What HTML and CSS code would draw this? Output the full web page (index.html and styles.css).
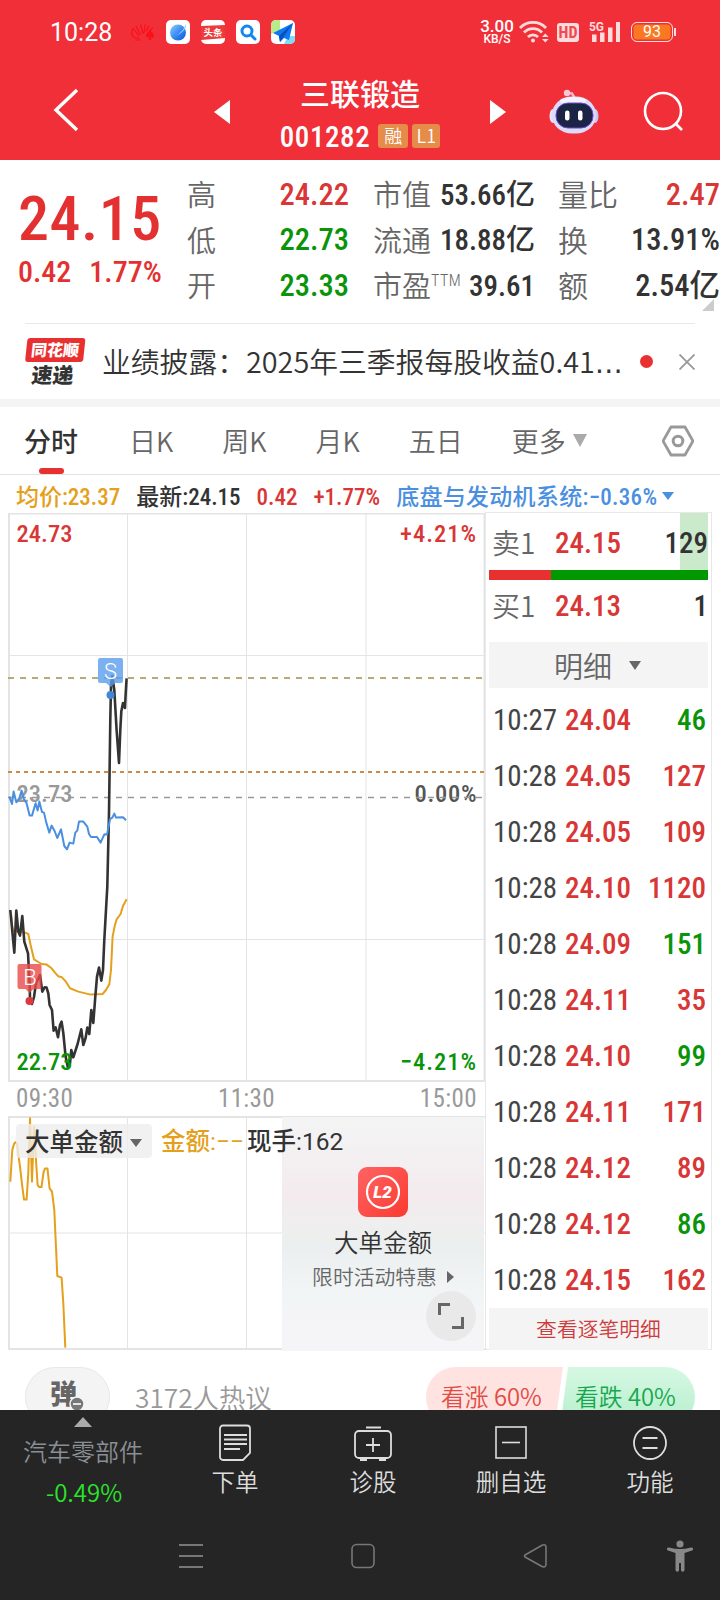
FILE: index.html
```html
<!DOCTYPE html>
<html lang="zh-CN">
<head>
    <meta charset="UTF-8">
    <meta name="viewport" content="width=device-width, initial-scale=1.0">
    <title>三联锻造 001282</title>
    <link rel="stylesheet" href="styles.css">
</head>
<body>
    <header class="top">
        <div class="status-bar">
            <span class="clock">10:28</span>
            <div class="apps">
                <svg class="huawei" width="24" height="24" viewBox="0 0 24 24" fill="none" stroke="#fb0f18" stroke-width="1.2">
                    <path d="M2.500 17C0 14 0 11 2 8.500l6 7.500M5 6l4.500 9M9.500 4.500L12 14M14 4.500L13 13M18 5.500l-3 6M22 8l-3 2M2.500 17.500l6 .5M4 20h6"/>
                    <path d="M19 9c-1 3-4 4-4 7 0 2 3 2 3.600 1l-1 3h3l-1-3c1 1 3.400 1 3.400-1 0-3-3-4-4-7z" fill="#fb0f18" stroke="none"/>
                </svg>
                <svg width="24" height="24" viewBox="0 0 24 24">
                    <defs><linearGradient id="planet" x1="0" y1="0" x2="1" y2="1"><stop offset="0" stop-color="#8fd0ff"/><stop offset=".5" stop-color="#3b8cf5"/><stop offset="1" stop-color="#0a55d8"/></linearGradient></defs>
                    <rect width="24" height="24" rx="5" fill="#fff"/>
                    <circle cx="12" cy="12.500" r="8" fill="url(#planet)"/>
                    <path d="M4 17.500C10 17 17 12 20 4c1.500 4-5 11.500-16 13.500z" fill="#9ad2ff"/>
                </svg>
                <svg width="24" height="24" viewBox="0 0 24 24">
                    <rect width="24" height="24" rx="5" fill="#fff"/>
                    <path d="M0 6l24-1v13L0 20z" fill="#ee3a3c"/>
                    <text x="12" y="16" font-size="9.500" text-anchor="middle" fill="#fff" font-weight="700">头条</text>
                </svg>
                <svg width="24" height="24" viewBox="0 0 24 24" fill="none" stroke="#1487ee">
                    <rect width="24" height="24" rx="5" fill="#fff" stroke="none"/>
                    <circle cx="11" cy="11" r="5" stroke-width="3"/>
                    <path d="M15 15l4 4" stroke-width="3" stroke-linecap="round"/>
                </svg>
                <svg width="24" height="24" viewBox="0 0 24 24">
                    <rect width="24" height="24" rx="5" fill="#fff"/>
                    <path d="M5 0h4v10l-9 4V5a5 5 0 0 1 5-5z" fill="#b8ec8a"/>
                    <path d="M13 24l4-8h7v3a5 5 0 0 1-5 5z" fill="#7fdcf8"/>
                    <path d="M22 3L2 13l6 3 1 6 4-4 5 2z" fill="#1078f0"/>
                    <path d="M22 3L8 16l1 6z" fill="#0a50c0"/>
                </svg>
            </div>
            <div class="speed"><b>3.00</b><span>KB/S</span></div>
            <svg class="wifi" width="30" height="24" viewBox="0 0 30 24" fill="none" stroke="#ffdbdc" stroke-width="2.800">
                <path d="M1 8a18 18 0 0 1 26 0M5 12.500a12.500 12.500 0 0 1 18 0M9 17a7 7 0 0 1 10 0"/>
                <circle cx="14" cy="20.500" r="2" fill="#ffdbdc" stroke="none"/>
                <path d="M23 17l3.300-3.600 3.300 3.600zM23 19l3.300 3.600L29.600 19z" fill="#ffdbdc" stroke="none"/>
            </svg>
            <span class="hd">HD</span>
            <svg class="signal" width="31" height="24" viewBox="0 0 31 24" fill="#ffdbdc">
                <path d="M3 14.500h4.500V22H3zM11 12.500h4.500V22H11zM19 7.500h4.500V22H19zM27 2h4v20h-4z"/>
                <text x="0" y="11" font-size="13" font-weight="700" textLength="15" lengthAdjust="spacingAndGlyphs">5G</text>
            </svg>
            <span class="battery">93</span>
        </div>
        <nav class="title-bar">
            <svg class="back" width="28" height="44" viewBox="0 0 28 44" fill="none" stroke="#fff" stroke-width="3.400"><path d="M25 2L4 22l21 20"/></svg>
            <svg class="prev" width="16" height="24" viewBox="0 0 16 24"><path d="M16 0v24L0 12z" fill="#fff"/></svg>
            <div class="stock">
                <h1>三联锻造</h1>
                <div class="code"><span class="num">001282</span><i>融</i><i class="level">L1</i></div>
            </div>
            <svg class="next" width="16" height="24" viewBox="0 0 16 24"><path d="M0 0v24l16-12z" fill="#fff"/></svg>
            <svg class="robot" width="50" height="46" viewBox="0 0 50 46">
                <path d="M18 4l5 .5 3 5" fill="none" stroke="#f7b6cb" stroke-width="2.500"/>
                <circle cx="18" cy="4" r="3.200" fill="#f9c7d6"/>
                <ellipse cx="4" cy="27" rx="3.500" ry="7" fill="#e3e2fb"/>
                <ellipse cx="46" cy="27" rx="3.500" ry="7" fill="#c9c8f7"/>
                <rect x="3" y="7.500" width="44" height="37" rx="20" ry="18" fill="#dcdcfa"/>
                <ellipse cx="24" cy="12" rx="13" ry="4" fill="#f2f3ff"/>
                <rect x="7" y="14" width="37" height="25" rx="12" fill="#1b2444" stroke="#6a4ad0" stroke-width="1"/>
                <rect x="16" y="21.500" width="4.500" height="10" rx="2.200" fill="#fff"/>
                <rect x="29" y="21.500" width="4.500" height="10" rx="2.200" fill="#fff"/>
            </svg>
            <svg class="search" width="42" height="42" viewBox="0 0 42 42" fill="none" stroke="#fff" stroke-width="2.600"><circle cx="20" cy="20" r="18"/><path d="M32 32l7 7"/></svg>
        </nav>
    </header>

    <section class="quote">
        <div class="price">
            <strong class="num">24.15</strong>
            <div class="change num"><span>0.42</span><span>1.77%</span></div>
        </div>
        <dl>
            <div><dt>高</dt><dd class="num up">24.22</dd></div>
            <div><dt>低</dt><dd class="num down">22.73</dd></div>
            <div><dt>开</dt><dd class="num down">23.33</dd></div>
        </dl>
        <dl class="value">
            <div><dt>市值</dt><dd class="num">53.66亿</dd></div>
            <div><dt>流通</dt><dd class="num">18.88亿</dd></div>
            <div><dt>市盈<sup>TTM</sup></dt><dd class="num">39.61</dd></div>
        </dl>
        <dl>
            <div><dt>量比</dt><dd class="num up">2.47</dd></div>
            <div><dt>换</dt><dd class="num">13.91%</dd></div>
            <div><dt>额</dt><dd class="num">2.54亿</dd></div>
        </dl>
        <span class="corner"></span>
    </section>

    <section class="news">
        <div class="news-logo"><span>同花顺</span><em>速递</em></div>
        <p>业绩披露：2025年三季报每股收益0.41<span>…</span></p>
        <span class="dot"></span>
        <svg width="16" height="16" viewBox="0 0 16 16" stroke="#999" stroke-width="1.800"><path d="M.5.500l15 15M15.500.500l-15 15"/></svg>
    </section>

    <nav class="tabs">
        <a class="active">分时</a>
        <a>日K</a>
        <a>周K</a>
        <a>月K</a>
        <a>五日</a>
        <a>更多</a>
        <i class="more"></i>
        <svg width="32" height="32" viewBox="0 0 32 32" fill="none" stroke="#999" stroke-linejoin="round"><path d="M9 2h14l8 14-8 14H9L1 16z" stroke-width="2.800"/><circle cx="16" cy="16" r="4.800" stroke-width="3"/></svg>
    </nav>

    <div class="legend num">
        <span class="avg">均价:23.37</span>
        <span>最新:24.15</span>
        <span class="up">0.42</span>
        <span class="up">+1.77%</span>
        <span class="sector">底盘与发动机系统:−0.36%</span>
        <i></i>
    </div>

    <main class="board">
        <div class="charts">
            <svg class="minute" width="478" height="569" viewBox="8 513 478 569">
                <g class="grid">
                    <path d="M8 655.500h478M8 939.500h478M127.500 513v569M246.500 513v569M366 513v569"/>
                    <path d="M9 513v569M8 513.500h478M8 1081h478M484.500 513v569" stroke-width="2"/>
                </g>
                <g class="chart-text gray"><text x="16.500" y="802" textLength="56">23.73</text></g>
                <g class="chart-text dark"><text x="414.500" y="802" textLength="62">0.00%</text></g>
                <path d="M8 678h477" stroke="#b9a878" stroke-width="2" stroke-dasharray="6 6"/>
                <path d="M8 772h477" stroke="#c98d45" stroke-width="2" stroke-dasharray="4 4"/>
                <path d="M8 797.500h478" stroke="#999" stroke-width="1.600" stroke-dasharray="6 6"/>
                <polyline class="avg-line" points="11,914 12,925 13.300,931 25,932.600 28.300,934 30.600,945 34,959.300 38.300,962 41.600,964 46.600,964.600 51.600,968.300 55,972.600 58.300,976.300 62,977.300 65.600,981.300 70,988.300 78.300,991.600 90.600,994.600 102.600,994 106,990 109.300,984.300 111,970 112.600,936.600 114.600,926.600 116.600,919.300 120.600,914 123,906 126.600,899.300"/>
                <polyline class="price-line" points="10.300,910 14.300,952.600 16.300,910.600 18.300,931.600 20,935.600 22.300,916 24.300,941.600 28,953.300 29.600,983 30,998 32,1004 34,997 36,983 40,975 42.300,991.600 44.600,987.300 46.600,987.600 48.300,993.300 49.600,1005 52,1010 53.600,1030.600 55.600,1027.300 58,1037.300 60,1025 61.600,1021.600 63.300,1033 65.600,1056.600 68,1068 70,1063 71.300,1050 73.300,1057.300 77.600,1044 81.300,1029.300 83.300,1045 85.600,1038 87.300,1027.600 89.300,1034 91.300,1010 93.300,1023 95.300,996.600 97,976.600 99,967.600 101.300,980.600 103,970 104.300,940 107.300,886.600 109,813 110.300,720 111,686 112.300,676 114.300,690 116.600,730 119,763 120.300,730 121.300,711.600 123,703 125,708 125.600,695 126.600,678.300"/>
                <polyline class="sector-line" points="9.300,796.600 12,804 13.600,791.600 16.300,802.300 19.300,798.300 21.600,790.600 24,799.300 26.600,803.300 29.600,815.600 32,815.600 35.600,803.300 37.600,810.600 39.300,801.600 42,812 44,812.600 46.300,822.600 49.300,832.600 51.600,825.600 54.600,831 57.300,838 61,829.300 64.300,846 67,849.300 69.600,842.600 73.300,843.600 75.300,832.600 77.300,830.600 79,821.600 83.300,821.600 87.300,826.600 89,834 91,837 97,837 100.600,842.600 104.300,834.300 107,834.600 110,819.300 112.300,817.600 114.300,813.600 116,817.600 123,817.300 126,820.300"/>
                <g class="mark-s"><path d="M100 658h21a2 2 0 0 1 2 2v21a2 2 0 0 1-2 2h-6l-4 4-5-4h-6a2 2 0 0 1-2-2v-21a2 2 0 0 1 2-2z"/><circle cx="110.500" cy="695" r="4"/><text x="110.500" y="678.500">S</text></g>
                <g class="mark-b"><path d="M19.500 964h20a2 2 0 0 1 2 2v21a2 2 0 0 1-2 2h-6l-4 4-4-4h-6a2 2 0 0 1-2-2v-21a2 2 0 0 1 2-2z"/><circle cx="29.500" cy="1001" r="4"/><text x="30" y="984.500">B</text></g>
                <g class="chart-text red"><text x="16.500" y="541.500" textLength="56">24.73</text><text x="400" y="541.500" textLength="76">+4.21%</text></g>
                <g class="chart-text green"><text x="16.500" y="1069.500" textLength="56">22.73</text><text x="400" y="1069.500" textLength="76">−4.21%</text></g>
            </svg>
            <div class="axis num"><span>09:30</span><span>11:30</span><span>15:00</span></div>
            <div class="sub">
                <svg width="478" height="234" viewBox="8 1116 478 234">
                    <g class="grid">
                        <path d="M8 1233h478M127.500 1117v232M246.500 1117v232M366 1117v232"/>
                        <path d="M9 1116v234M8 1117h478M8 1349h478" stroke-width="2"/>
                    </g>
                    <path class="avg-line" d="M10.300 1181.700L12.300 1150 14 1144Q16 1140 17 1144.600L20 1166.600 22.300 1186.600 24 1199.600H26.600L28.300 1173 30 1118.300 32 1181.600 34 1126.600 36 1160 37.600 1185 39 1187H41.500L43.600 1172 45 1168.600H47.500L49.600 1188.300 52 1191.600 54.300 1210 57.300 1276 61.600 1277.600 63.300 1303 65.300 1347.600"/>
                </svg>
                <div class="sub-head"><span class="pick">大单金额<i></i></span><span class="avg">金额:−−</span><span class="hand">现手:162</span></div>
                <div class="promo">
                    <svg width="50" height="50" viewBox="0 0 50 50">
                        <defs><linearGradient id="l2" x1="0" y1="0" x2="1" y2="1"><stop offset="0" stop-color="#ff6464"/><stop offset="1" stop-color="#fb3a30"/></linearGradient></defs>
                        <rect width="50" height="50" rx="9" fill="url(#l2)"/>
                        <circle cx="25" cy="25" r="16" fill="none" stroke="#fff" stroke-width="2.200"/>
                        <text x="24.500" y="31" text-anchor="middle" font-size="17" font-weight="900" font-style="italic" fill="#fff">L2</text>
                    </svg>
                    <b>大单金额</b>
                    <small>限时活动特惠<i></i></small>
                    <span class="expand"><svg width="28" height="28" viewBox="0 0 28 28" fill="none" stroke="#666" stroke-width="3"><path d="M2.500 13V2.500H13M15 25.500h10.500V15"/></svg></span>
                </div>
            </div>
        </div>
        <aside class="depth">
            <div class="order num"><span>卖1</span><b>24.15</b><em class="hot">129</em></div>
            <div class="ratio"><i></i></div>
            <div class="order buy num"><span>买1</span><b>24.13</b><em>1</em></div>
            <div class="detail-head">明细<i></i></div>
            <ul class="ticks num">
                <li><span>10:27</span><b>24.04</b><em class="down">46</em></li>
                <li><span>10:28</span><b>24.05</b><em class="up">127</em></li>
                <li><span>10:28</span><b>24.05</b><em class="up">109</em></li>
                <li><span>10:28</span><b>24.10</b><em class="up">1120</em></li>
                <li><span>10:28</span><b>24.09</b><em class="down">151</em></li>
                <li><span>10:28</span><b>24.11</b><em class="up">35</em></li>
                <li><span>10:28</span><b>24.10</b><em class="down">99</em></li>
                <li><span>10:28</span><b>24.11</b><em class="up">171</em></li>
                <li><span>10:28</span><b>24.12</b><em class="up">89</em></li>
                <li><span>10:28</span><b>24.12</b><em class="down">86</em></li>
                <li><span>10:28</span><b>24.15</b><em class="up">162</em></li>
            </ul>
            <a class="all">查看逐笔明细</a>
        </aside>
    </main>

    <section class="talk">
        <div class="danmu">弹<svg width="16" height="16" viewBox="0 0 16 16"><circle cx="8" cy="8" r="7" fill="#777" stroke="#f4f4f4" stroke-width="1.500"/><path d="M4 8h8" stroke="#fff" stroke-width="1.600"/></svg></div>
        <p>3172人热议</p>
        <div class="vote"><span class="bull">看涨 60%</span><span class="bear">看跌 40%</span></div>
    </section>

    <footer class="bottom">
        <div class="menu">
            <div class="index"><i></i><span>汽车零部件</span><b>-0.49%</b></div>
            <a><svg width="34" height="38" viewBox="0 0 34 38" fill="none" stroke="#ddd" stroke-width="1.800"><path d="M5 1.500h24a3 3 0 0 1 3 3V29l-7 7H5a3 3 0 0 1-3-3V4.500a3 3 0 0 1 3-3zM6 11h23M6 15.500h23M6 20h23M6 25h16"/></svg>下单</a>
            <a><svg width="40" height="38" viewBox="0 0 40 38" fill="none" stroke="#ddd" stroke-width="1.800"><rect x="2" y="7" width="36" height="27" rx="4"/><path d="M13 3.500h15M20 14v14M13 21h14M7 36h7M26 36h7"/></svg>诊股</a>
            <a><svg width="34" height="38" viewBox="0 0 34 38" fill="none" stroke="#ddd" stroke-width="1.600"><rect x="2" y="3" width="30" height="31"/><path d="M8 18.500h18"/></svg>删自选</a>
            <a><svg width="36" height="38" viewBox="0 0 36 38" fill="none" stroke="#ddd" stroke-width="1.800"><circle cx="18" cy="19" r="16"/><path d="M10.500 14h15M10.500 24h15"/></svg>功能</a>
        </div>
        <div class="system">
            <svg width="24" height="26" viewBox="0 0 24 26" stroke="#777" stroke-width="1.800"><path d="M0 2h24M0 13h24M0 24h24"/></svg>
            <svg width="26" height="26" viewBox="0 0 26 26" fill="none" stroke="#777" stroke-width="1.600"><rect x="2" y="1.500" width="22" height="23" rx="4.500"/></svg>
            <svg width="26" height="26" viewBox="0 0 26 26" fill="none" stroke="#777" stroke-width="1.600"><path d="M3 12L20 2.200q4-1.500 4 2V21q0 4-4 2.500L3 14q-1-1 0-2z"/></svg>
            <svg width="26" height="34" viewBox="0 0 26 34" fill="#888"><circle cx="13" cy="5" r="3.600"/><path d="M2 8.500q11 3 22 0a1.500 1.500 0 0 1 1 3L17.500 14v17a1.500 1.500 0 0 1-3.500 0v-7h-2v7a1.500 1.500 0 0 1-3.500 0V14L1 11.500a1.500 1.500 0 0 1 1-3z"/></svg>
        </div>
    </footer>
</body>
</html>
```

FILE: styles.css
```css
* {
    box-sizing: border-box;
}

body {
    margin: 0;
    width: 720px;
    height: 1600px;
    overflow: hidden;
    display: flex;
    flex-direction: column;
    background-color: #fff;
    color: #333;
    font-family: "Noto Sans CJK SC", sans-serif;
    font-weight: 350;
}

svg {
    display: block;
    flex: none;
}

svg text {
    font-family: Roboto, "Noto Sans CJK SC", sans-serif;
}

i, em {
    font-style: normal;
}

.num {
    font-family: Roboto, "Noto Sans CJK SC", sans-serif;
    font-weight: 500;
    font-stretch: 75%;
    white-space: nowrap;
}

.up {
    color: #d93636;
}

.down {
    color: #099409;
}

/* header */
.top {
    height: 160px;
    flex: none;
    background-color: #f12f38;
    color: #fff;
}

.status-bar {
    display: flex;
    align-items: center;
    height: 64px;
    padding-left: 50px;
}

.clock {
    width: 81px;
    font-family: Roboto, sans-serif;
    font-size: 25px;
    font-weight: 400;
}

.apps {
    display: flex;
    gap: 11px;
    width: 349px;
}

.speed {
    display: flex;
    flex-direction: column;
    align-items: center;
    width: 34px;
    font-family: Roboto, sans-serif;
    font-size: 12px;
    font-weight: 500;
    line-height: 12px;
}

.speed b {
    font-size: 17px;
    font-weight: 500;
    line-height: 13px;
}

.wifi {
    margin-left: 5px;
}

.hd {
    width: 22px;
    height: 19px;
    margin-left: 8px;
    border-radius: 3px;
    background-color: #ffdbdc;
    color: #ee4a52;
    font: 700 16px/20px Roboto, sans-serif;
    font-stretch: 75%;
    text-align: center;
}

.signal {
    margin-left: 10px;
}

.battery {
    position: relative;
    width: 42px;
    height: 20px;
    margin-left: 11px;
    border: 1.5px solid #ffdbdc;
    border-radius: 6px;
    background-color: #fa7820;
    box-shadow: inset 0 0 0 1.5px #f12f38;
    font: 400 16px/18px Roboto, sans-serif;
    text-align: center;
}

.battery::after {
    content: "";
    position: absolute;
    right: -4px;
    top: 5px;
    width: 2px;
    height: 8px;
    background-color: #ffdbdc;
}

.title-bar {
    display: flex;
    align-items: center;
    height: 96px;
    padding-left: 52px;
}

.back {
    margin-top: -4px;
}

.prev {
    margin-left: 134px;
}

.stock {
    width: 260px;
    text-align: center;
}

.stock h1 {
    margin: 2px 0 0;
    font-size: 30px;
    line-height: 40px;
    font-weight: 500;
}

.code {
    display: flex;
    align-items: center;
    justify-content: center;
    gap: 4px;
    height: 42px;
    font-size: 29px;
}

.code .num {
    margin: 7px 4px 0 0;
    letter-spacing: 0.6px;
    line-height: 36px;
}

.code i {
    width: 30px;
    height: 24px;
    margin-top: 6px;
    border-radius: 3px;
    background-color: #e58c4a;
    font-size: 18px;
    line-height: 23px;
}

.code .level {
    width: 28px;
}

.robot {
    margin-left: 43px;
}

.search {
    margin-left: 44px;
}

/* quote */
.quote {
    position: relative;
    display: flex;
    height: 163px;
    flex: none;
    padding-top: 11px;
}

.price {
    width: 187px;
    padding: 18px 0 0 18px;
    color: #e33131;
}

.price strong {
    display: block;
    font-size: 62px;
    line-height: 60px;
    font-weight: 500;
    letter-spacing: 0.5px;
}

.change {
    display: flex;
    gap: 18px;
    font-size: 30px;
    line-height: 46px;
}

.quote dl {
    width: 162px;
    margin: 0 24px 0 0;
}

.quote dl:last-of-type {
    width: 162px;
    margin: 0 0 0 -1px;
}

.quote dl div {
    display: flex;
    justify-content: space-between;
    align-items: center;
    height: 45.500px;
}

.quote dt {
    margin-top: -1px;
    font-size: 29px;
    line-height: 40px;
    color: #666;
    white-space: nowrap;
}

.quote dl:last-of-type dt {
    font-size: 30px;
}

.quote dd {
    margin: 2px 0 0;
    font-size: 30.500px;
    line-height: 40px;
}

.quote .value dd {
    font-size: 29px;
}

.quote sup {
    font: 300 16px/10px Roboto, sans-serif;
    font-stretch: 75%;
    letter-spacing: 0.5px;
}

.corner {
    position: absolute;
    right: 6px;
    bottom: 12px;
    border-left: 12px solid transparent;
    border-bottom: 12px solid #ccc;
}

/* news strip */
.news {
    display: flex;
    align-items: center;
    height: 76px;
    flex: none;
    margin: 0 25px;
    border-top: 1px solid #e8e8e8;
}

.news-logo {
    width: 58px;
    margin-right: 19px;
    text-align: center;
    transform: skewX(-6deg);
}

.news-logo span {
    display: block;
    height: 24px;
    border-radius: 3px;
    background-color: #e93030;
    color: #fff;
    font-size: 16px;
    line-height: 23px;
    font-weight: 900;
}

.news-logo em {
    display: block;
    font-size: 21px;
    line-height: 24px;
    font-weight: 900;
}

.news p {
    width: 522px;
    margin: 2px 0 0;
    font-size: 28.800px;
    line-height: 40px;
    white-space: nowrap;
}

.news p span {
    font-family: "DejaVu Sans", sans-serif;
    font-size: 28px;
    font-weight: 400;
}

.dot {
    width: 13px;
    height: 13px;
    margin: 0 26px 0 16px;
    border-radius: 50%;
    background-color: #e93030;
}

/* tabs */
.tabs {
    position: relative;
    display: flex;
    align-items: center;
    height: 76px;
    flex: none;
    padding-left: 24px;
    border-top: 8px solid #f4f4f4;
    border-bottom: 1px solid #e2e2e2;
    font-size: 27px;
    color: #666;
}

.tabs a {
    margin-right: 49px;
}

.tabs .active {
    margin-right: 51px;
    color: #333;
    font-weight: 500;
}

.tabs .active::after {
    content: "";
    position: absolute;
    left: 39px;
    bottom: 0;
    width: 25px;
    height: 6px;
    border-radius: 3px;
    background-color: #e93030;
}

.more {
    margin: 0 75px 0 -42px;
    border: 7.500px solid transparent;
    border-top: 13px solid #aaa;
    border-bottom: 0;
}

/* legend */
.legend {
    display: flex;
    align-items: center;
    height: 37px;
    flex: none;
    padding: 8px 0 0 16px;
    gap: 16px;
    font-size: 23px;
}

.legend span {
    line-height: 30px;
}

.avg {
    color: #e4a01b;
}

.legend .sector {
    color: #4a8fe0;
    letter-spacing: 0.300px;
}

.legend i {
    margin: -4px 0 0 -11px;
    border: 6px solid transparent;
    border-top: 8px solid #4a8fe0;
    border-bottom: 0;
}

/* charts */
.board {
    display: flex;
    height: 838px;
    flex: none;
    padding-left: 8px;
}

.charts {
    width: 477px;
    padding-top: 1px;
}

.grid {
    fill: none;
    stroke: #e4e4e4;
}

.chart-text {
    font-size: 24.500px;
    font-weight: 500;
}

.chart-text text {
    font-stretch: 75%;
}

.gray { fill: #999; }
.dark { fill: #555; }
.red { fill: #d93636; }
.green { fill: #099409; }

.price-line,
.avg-line,
.sector-line {
    fill: none;
    stroke: #333;
    stroke-width: 2.6;
    stroke-linejoin: round;
}

.avg-line {
    stroke: #e4a01b;
    stroke-width: 2;
}

.sector-line {
    stroke: #4a8fe0;
    stroke-width: 2;
}

.mark-s path { fill: #5a9dec; fill-opacity: .8; }
.mark-s circle { fill: #4186d8; }
.mark-b path { fill: #ea4848; fill-opacity: .8; }
.mark-b circle { fill: #dd3a40; }

.mark-s text,
.mark-b text {
    fill: #fff;
    font-size: 22px;
    text-anchor: middle;
}

.axis {
    display: flex;
    justify-content: space-between;
    height: 34px;
    padding: 0 8px;
    color: #999;
    font-size: 25px;
    font-weight: 400;
    line-height: 34px;
    letter-spacing: 0.4px;
}

.sub {
    position: relative;
    height: 234px;
}

.sub-head {
    position: absolute;
    left: 8px;
    top: 8px;
    z-index: 1;
    display: flex;
    align-items: center;
    height: 34px;
    font-family: Roboto, "Noto Sans CJK SC", sans-serif;
    font-size: 24.500px;
    line-height: 34px;
    font-weight: 450;
    white-space: nowrap;
}

.sub-head .avg,
.hand {
    margin: 1px 3px 0 0;
}

.pick {
    display: flex;
    align-items: center;
    gap: 7px;
    width: 136px;
    height: 34px;
    margin-right: 9px;
    padding: 3px 0 0 9px;
    border-radius: 4px;
    background-color: rgba(238, 238, 238, 0.8);
}

.pick i {
    border: 6px solid transparent;
    border-top: 8px solid #666;
    border-bottom: 0;
}

.promo {
    position: absolute;
    left: 274px;
    top: 1px;
    display: flex;
    flex-direction: column;
    align-items: center;
    width: 202px;
    height: 234px;
    padding-top: 50px;
    background: linear-gradient(#f4f4f5 0%, #f3ebed 35%, #f0eeee 45%, #ebefef 57%, #f1f5f6 75%, #f5f4f7 88%);
}

.promo b {
    margin-top: 7px;
    font-size: 24.500px;
    line-height: 36px;
    font-weight: 350;
}

.promo small {
    display: flex;
    align-items: center;
    gap: 10px;
    font-size: 20.800px;
    line-height: 33px;
    color: #666;
}

.promo small i {
    border: 6px solid transparent;
    border-left: 7px solid #666;
    border-right: 0;
}

.expand {
    position: absolute;
    right: 8px;
    bottom: 10px;
    display: grid;
    place-items: center;
    width: 50px;
    height: 50px;
    border-radius: 50%;
    background-color: #e9e9e9;
}

/* order book */
.depth {
    width: 227px;
    padding: 0 3px 0 3px;
    border: 1px solid #e8e8e8;
}

.order {
    display: flex;
    align-items: center;
    height: 57px;
    padding: 3px 0 0 3px;
    font-size: 29px;
    line-height: 34px;
}

.order span {
    width: 63px;
    margin-top: -2px;
    color: #666;
    font-family: "Noto Sans CJK SC", sans-serif;
    font-size: 28px;
    font-weight: 350;
}

.order b,
.ticks b {
    font-weight: 500;
    color: #d93636;
}

.order em {
    margin-left: auto;
}

.order .hot {
    margin-top: -3px;
    padding: 13px 0 10px;
    background: linear-gradient(90deg, transparent 15px, #cbe9cb 15px);
}

.buy {
    height: 52px;
    padding-top: 0;
}

.ratio {
    height: 10px;
    background-color: #009a00;
}

.ratio i {
    display: block;
    width: 28.5%;
    height: 10px;
    background-color: #e93030;
}

.detail-head {
    display: flex;
    align-items: center;
    justify-content: center;
    gap: 17px;
    height: 46px;
    margin-top: 10px;
    padding-right: 2px;
    background-color: #f4f4f4;
    color: #666;
    font-size: 29px;
}

.detail-head i {
    border: 6px solid transparent;
    border-top: 9px solid #666;
    border-bottom: 0;
}

.ticks {
    margin: 0;
    padding: 4px 2px 0 4px;
    list-style: none;
    font-size: 29px;
}

.ticks li {
    display: flex;
    align-items: center;
    height: 56px;
}

.ticks span {
    width: 72px;
    color: #444;
    font-weight: 400;
}

.ticks em {
    margin-left: auto;
}

.all {
    display: block;
    height: 42px;
    background-color: #f4f4f4;
    color: #cf3b3b;
    font-size: 20.800px;
    line-height: 41px;
    text-align: center;
}

/* discussion */
.talk {
    display: flex;
    height: 60px;
    flex: none;
    padding: 17px 25px 0;
    overflow: hidden;
}

.danmu {
    position: relative;
    width: 85px;
    height: 60px;
    flex: none;
    padding-left: 24px;
    border: 1px solid #e8e8e8;
    border-radius: 30px;
    background-color: #f4f4f4;
    color: #666;
    font-size: 27px;
    line-height: 50px;
    font-weight: 900;
}

.danmu svg {
    position: absolute;
    left: 43px;
    top: 28px;
}

.talk p {
    margin: 0 0 0 25px;
    font-size: 26.300px;
    line-height: 59px;
    color: #999;
}

.vote {
    display: flex;
    margin-left: auto;
    font-size: 23.800px;
    line-height: 57px;
    font-weight: 350;
}

.vote span {
    width: 137px;
    height: 60px;
    padding-left: 15px;
    border-radius: 30px 0 0 30px;
    background-color: #fee3e1;
    color: #e34b44;
    clip-path: polygon(0 0, 100% 0, 94% 100%, 0 100%);
}

.vote .bear {
    width: 135px;
    margin-left: -3px;
    padding-left: 15px;
    border-radius: 0 30px 30px 0;
    background: linear-gradient(#d6f8e3, #b5eecb);
    color: #17a84f;
    clip-path: polygon(6% 0, 100% 0, 100% 100%, 0 100%);
}

/* bottom bars */
.bottom {
    flex: none;
    height: 190px;
    background-color: #252525;
    color: #ddd;
}

.menu {
    display: grid;
    grid-template-columns: 166px 138px 138px 138px 140px;
    height: 106px;
}

.menu a {
    display: flex;
    flex-direction: column;
    align-items: center;
    padding-top: 14px;
    font-size: 23.500px;
    line-height: 38px;
}

.index {
    display: flex;
    flex-direction: column;
    align-items: center;
    padding-top: 7px;
    color: #8a8f94;
    font-size: 24px;
    line-height: 44px;
}

.index i {
    border: 9px solid transparent;
    border-bottom: 10px solid #aaa;
    border-top: 0;
}

.index span {
    margin-top: 2px;
}

.index b {
    margin: -3px 0 0 2px;
    color: #2ae52a;
    font-weight: 350;
}

.system {
    display: flex;
    align-items: center;
    height: 80px;
    padding-left: 179px;
}

.system svg {
    margin-right: 147px;
}

.system svg:nth-child(2) {
    margin-right: 146px;
}

.system svg:nth-child(3) {
    margin-right: 119px;
}

.system svg:last-child {
    margin-right: 0;
}
```
